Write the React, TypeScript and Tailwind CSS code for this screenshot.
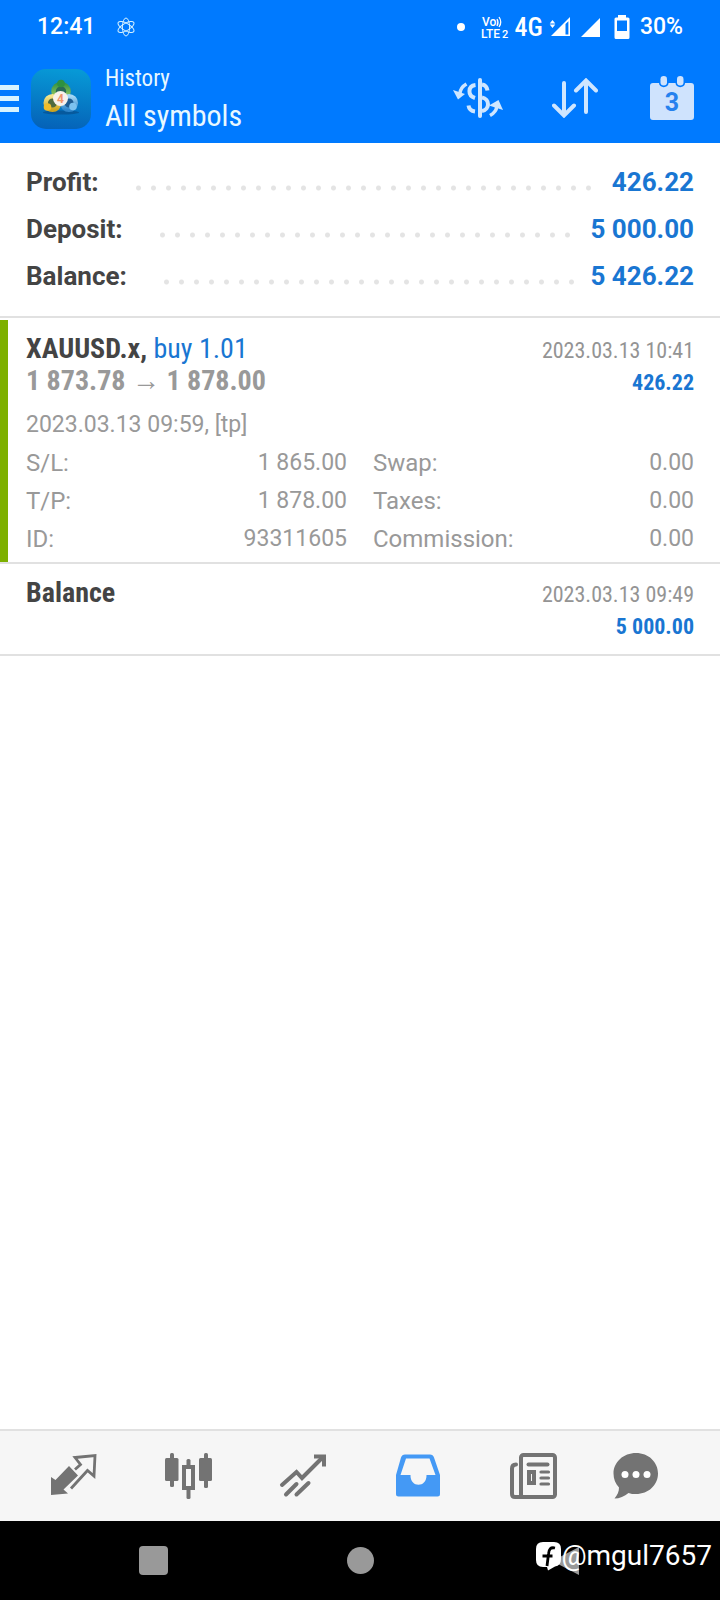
import React, { useState } from 'react';
import clsx from 'clsx';

const summary = [
  { label: 'Profit:', value: '426.22' },
  { label: 'Deposit:', value: '5 000.00' },
  { label: 'Balance:', value: '5 426.22' },
];

const details = [
  { label: 'S/L:', value: '1 865.00' },
  { label: 'Swap:', value: '0.00' },
  { label: 'T/P:', value: '1 878.00' },
  { label: 'Taxes:', value: '0.00' },
  { label: 'ID:', value: '93311605' },
  { label: 'Commission:', value: '0.00' },
];

const condensed = "font-['Roboto_Condensed','Roboto',sans-serif]";

const AtomIcon = () => (
  <svg width="18" height="20" viewBox="0 0 18 20" fill="none" stroke="#d5f1ff" strokeWidth="1">
    <ellipse cx="9" cy="10" rx="3.600" ry="9" />
    <ellipse cx="9" cy="10" rx="3.600" ry="9" transform="rotate(60 9 10)" />
    <ellipse cx="9" cy="10" rx="3.600" ry="9" transform="rotate(-60 9 10)" />
  </svg>
);

const VolteIcon = () => (
  <svg width="28" height="28" viewBox="0 0 28 28" fill="#fff">
    <text x="1" y="13" fontSize="12" fontWeight="500" fontFamily="Roboto, sans-serif">Vo</text>
    <g fill="none" stroke="#fff" strokeWidth="1.300">
      <path d="M16 6q2 3.500 0 7" />
      <path d="M18 4q3.500 5 0 10" />
    </g>
    <text x="0" y="25" fontSize="12" fontWeight="500" fontFamily="Roboto, sans-serif">LTE</text>
    <text x="21" y="25" fontSize="11" fontWeight="500" fontFamily="Roboto, sans-serif">2</text>
  </svg>
);

const SignalDataIcon = () => (
  <svg width="22" height="20" viewBox="0 0 22 20" fill="#fff">
    <path d="M3.500 3 6.300 6.500H.7zM3.500 11 .7 7.500h5.600z" />
    <path d="M21 0v19H2zM19.400 4.200 16.500 7v10.400h2.900z" fillRule="evenodd" />
  </svg>
);

const SignalIcon = () => (
  <svg width="19" height="19" viewBox="0 0 19 19" fill="#fff">
    <path d="M19 0v19H0z" />
  </svg>
);

const BatteryIcon = () => (
  <svg width="16" height="24" viewBox="0 0 16 24" fill="#fff">
    <path fillRule="evenodd" d="M4 0h8v2.500h2A1.500 1.500 0 0 1 15.500 4v18.500A1.500 1.500 0 0 1 14 24H2A1.500 1.500 0 0 1 .5 22.500V4A1.500 1.500 0 0 1 2 2.500h2zM3 5.500V16h10V5.500z" />
  </svg>
);

const AppLogo = () => (
  <svg width="60" height="60" viewBox="0 0 60 60">
    <defs>
      <linearGradient id="logo-bg" x1="0.5" y1="0" x2="0.4" y2="1">
        <stop offset="0" stopColor="#0799d6" />
        <stop offset="1" stopColor="#0562b8" />
      </linearGradient>
      <linearGradient id="logo-green" x1="0" y1="0" x2="0" y2="1">
        <stop offset="0" stopColor="#3a9444" />
        <stop offset="1" stopColor="#a5d468" />
      </linearGradient>
      <linearGradient id="logo-yellow" x1="0" y1="0" x2="0" y2="1">
        <stop offset="0" stopColor="#f3e58d" />
        <stop offset="1" stopColor="#cda51f" />
      </linearGradient>
      <linearGradient id="logo-blue" x1="0" y1="0" x2="0" y2="1">
        <stop offset="0" stopColor="#a5d8f5" />
        <stop offset="1" stopColor="#2f86cc" />
      </linearGradient>
    </defs>
    <rect width="60" height="60" rx="15" fill="url(#logo-bg)" />
    <ellipse cx="30" cy="43.500" rx="18" ry="2" fill="#064a86" opacity=".6" />
    <circle cx="30" cy="22.500" r="7.500" fill="#2a6b55" stroke="url(#logo-green)" strokeWidth="4.500" />
    <circle cx="21.500" cy="34" r="6.800" fill="#4f6a3e" stroke="url(#logo-yellow)" strokeWidth="4.500" />
    <circle cx="38" cy="34" r="6.800" fill="#1f5c92" stroke="url(#logo-blue)" strokeWidth="4.500" />
    <circle cx="30" cy="14.500" r="3.800" fill="#2e9141" />
    <circle cx="16.500" cy="38" r="3.800" fill="#f0bd2c" />
    <circle cx="42" cy="37.500" r="3.800" fill="#7cc2f0" />
    <circle cx="29.500" cy="29.500" r="7.500" fill="#f7f1ea" />
    <text x="29.500" y="34" fontSize="12" fontWeight="700" fill="#f0956b" textAnchor="middle" fontFamily="Roboto, sans-serif">4</text>
  </svg>
);

const CurrencyIcon = () => (
  <svg width="50" height="40" viewBox="0 0 50 40" fill="none" stroke="#cfe6ff" strokeWidth="4">
    <path d="M27 2v36" strokeLinecap="round" />
    <path d="M22.500 7c-8 1-8 10.500-.5 13" />
    <path d="M29 6.500c3 .5 5 2.500 5.500 6" />
    <path d="M29 19.500c8 1.500 8 12 0 13.500" />
    <path d="M22 33.500c-4-.5-6-2.500-6.500-6" />
    <path d="M13.500 6C9 8.500 7.500 11 7 15" strokeWidth="3.500" />
    <path d="M37 37.500c4.500-2.500 6.500-5 6.700-9" strokeWidth="3.500" />
    <path d="M0 12l12 4L5 21.500z" fill="#cfe6ff" stroke="none" />
    <path d="M36 27.500 45.500 22 50 32z" fill="#cfe6ff" stroke="none" />
  </svg>
);

const SortIcon = () => (
  <svg width="46" height="40" viewBox="0 0 46 40" fill="none" stroke="#cfe6ff" strokeWidth="4" strokeLinecap="round">
    <path d="M12 5v32M2 27.500 12 37.500l10-10" />
    <path d="M34 34V3M24 12.500 34 2.500l10 10" />
  </svg>
);

const CalendarIcon = () => (
  <svg width="44" height="44" viewBox="0 0 44 44" fill="#cfe3fd">
    <path d="M3 7h6c0 5.500 9.500 5.500 9.500 0h7c0 5.500 9.500 5.500 9.500 0h6q3 0 3 3v31q0 3-3 3H3q-3 0-3-3V10q0-3 3-3z" />
    <rect x="10.500" y="0" width="6.500" height="9.500" rx="3.200" />
    <rect x="27" y="0" width="6.500" height="9.500" rx="3.200" />
    <text x="22" y="35" fontSize="25" fontWeight="700" fill="#2581ee" textAnchor="middle" fontFamily="Roboto, sans-serif">3</text>
  </svg>
);

const QuotesIcon = () => (
  <svg width="48" height="48" viewBox="0 0 48 48">
    <path d="M2 25v18l17-1.500-4.500-4L29 23.500l-9-9.500L6.500 28z" fill="#737373" />
    <path d="M26 17.500l5.500-5-5.500-7 20-2-1 20.500-6.500-5.500L22 36.500" fill="none" stroke="#737373" strokeWidth="2.800" />
  </svg>
);

const ChartIcon = () => (
  <svg width="48" height="48" viewBox="0 0 48 48" fill="#737373">
    <rect x="6" y="1" width="4" height="34" rx="1.500" />
    <rect x="1" y="6" width="13.500" height="23" rx="1.500" />
    <rect x="40" y="1" width="4" height="35" rx="1.500" />
    <rect x="35" y="6" width="13" height="23" rx="1.500" />
    <rect x="22.500" y="7" width="4" height="40" rx="1.500" />
    <rect x="20" y="15" width="9" height="21" fill="#f6f6f6" stroke="#737373" strokeWidth="4" />
  </svg>
);

const TrendIcon = () => (
  <svg width="48" height="48" viewBox="0 0 48 48" fill="none" stroke="#737373" strokeWidth="4">
    <path d="M3 33 17.500 20l5.500 6L44 5" strokeLinecap="round" />
    <path d="M35 4.500h10v10" />
    <path d="M7 42.500 17.500 32M17.500 42.500 29.500 31" strokeLinecap="round" />
  </svg>
);

const InboxIcon = () => (
  <svg width="48" height="48" viewBox="0 0 48 48">
    <path d="M11 2.500h25q3 0 4 3L46 23v19q0 2.500-2.500 2.500h-39Q2 44.500 2 42V23l5-17.500q1-3 4-3z" fill="#4499f5" />
    <path d="M12 6.500h23.500L41.500 23H32.500c.5 13-16.500 13-16 0H6.500z" fill="#f6f6f6" />
  </svg>
);

const NewsIcon = () => (
  <svg width="48" height="48" viewBox="0 0 48 48" fill="none" stroke="#737373" strokeWidth="4">
    <rect x="12" y="3" width="34" height="42" rx="2.500" />
    <path d="M7 12.500Q3 12.500 3 16.500V42q0 3 3 3h8" strokeLinecap="round" />
    <path d="M19.500 12.500h19" strokeLinecap="round" />
    <rect x="20" y="20" width="5" height="11" />
    <path d="M32 20h7.500M32 26h7.500M32 32h7.500" strokeWidth="3.200" strokeLinecap="round" />
  </svg>
);

const ChatIcon = () => (
  <svg width="48" height="48" viewBox="0 0 48 48">
    <path d="M24 1c12.500 0 22 9 22 20.500S36.500 42 24 42c-3 0-5 0-7.500-1-4 3.500-9 5.500-14 5.500 3-3.500 4.500-7 4.500-11C3.500 32 1.500 27 1.500 21.500 1.500 10 11.500 1 24 1z" fill="#737373" />
    <g fill="#fff">
      <circle cx="13" cy="22.500" r="3.500" />
      <circle cx="24" cy="22.500" r="3.500" />
      <circle cx="35" cy="22.500" r="3.500" />
    </g>
  </svg>
);

const WatermarkIcon = () => (
  <svg width="25" height="29" viewBox="0 0 25 29">
    <path d="M7 0h11q7 0 7 7v10q0 7-6 7.500L12 28.500 11 25H7q-7 0-7-7V7q0-7 7-7z" fill="#fff" />
    <path d="M19 6c-4.500-1-6 1-6.500 6L11 24M6.500 14h10" fill="none" stroke="#000" strokeWidth="2.800" />
  </svg>
);

const tabs = [
  { name: 'Quotes', icon: <QuotesIcon /> },
  { name: 'Charts', icon: <ChartIcon /> },
  { name: 'Trade', icon: <TrendIcon /> },
  { name: 'History', icon: <InboxIcon /> },
  { name: 'News', icon: <NewsIcon /> },
  { name: 'Messages', icon: <ChatIcon /> },
];

const StatusBar = () => (
  <div className="flex h-[54px] items-center justify-between px-[37px] text-[23px] font-medium text-white">
    <div className="flex items-center gap-[22px]">
      <span>12:41</span>
      <AtomIcon />
    </div>
    <div className="flex items-center">
      <span className="mr-4 size-2 rounded-full bg-white" />
      <VolteIcon />
      <span className={clsx(condensed, 'mx-1.5 text-[26px]')}>4G</span>
      <SignalDataIcon />
      <span className="ml-2.5 mr-3.5"><SignalIcon /></span>
      <BatteryIcon />
      <span className="ml-2.5">30%</span>
    </div>
  </div>
);

const TradeHead = ({ title, date, amount, children }: any) => (
  <div className={clsx(condensed, 'flex justify-between')}>
    <div className="text-[28px] leading-8 text-[#444444]">
      <h2>{title}</h2>
      {children}
    </div>
    <div className="pt-0.5 text-right text-[22px] leading-8">
      <p className="text-[#949494]">{date}</p>
      <p className="font-bold text-[#1976d2]">{amount}</p>
    </div>
  </div>
);

export default function App() {
  const [active, setActive] = useState('History');

  return (
    <div className="flex min-h-screen flex-col bg-white font-['Roboto',sans-serif]">
      <header className="bg-[#007aff]">
        <StatusBar />
        <div className="flex h-[89px] items-center">
          <button aria-label="Menu" className="flex flex-col gap-1.5">
            <span className="h-[5px] w-[19px] bg-[#d8f3ff]" />
            <span className="h-[5px] w-[19px] bg-[#d8f3ff]" />
            <span className="h-[5px] w-[19px] bg-[#d8f3ff]" />
          </button>
          <div className="ml-3 mr-[14px]"><AppLogo /></div>
          <div className={clsx(condensed, 'flex-1 pb-0.5 text-[#e8f8ff]')}>
            <p className="text-[23px] leading-9">History</p>
            <h1 className="text-[30px] leading-[38px]">All symbols</h1>
          </div>
          <div className="flex items-center pb-0.5">
            <button aria-label="Symbols" className="flex w-[97px] justify-center"><CurrencyIcon /></button>
            <button aria-label="Sort" className="flex w-[97px] justify-center"><SortIcon /></button>
            <button aria-label="Period" className="flex w-[97px] justify-center"><CalendarIcon /></button>
          </div>
        </div>
      </header>

      <main className="flex-1">
        <section className="border-b-2 border-[#e1e1e1] px-[26px] pb-4 pt-4">
          {summary.map((row) => (
            <div key={row.label} className="flex h-[47px] items-center text-[26px] font-bold">
              <span className="text-[#444444]">{row.label}</span>
              <span className="ml-8 mr-4 mt-[10px] h-1.5 flex-1 bg-[radial-gradient(circle,#e4e4e4_2px,transparent_3px)] bg-[length:15px_6px] bg-repeat-x" />
              <span className="text-[#1976d2]">{row.value}</span>
            </div>
          ))}
        </section>

        <section className="border-b-2 border-[#e1e1e1] pt-0.5">
          <div className="border-l-8 border-[#7db000] pb-1 pl-[18px] pr-[26px] pt-[13px]">
            <TradeHead
              title={<><b>XAUUSD.x,</b> <span className="text-[#1976d2]">buy 1.01</span></>}
              date="2023.03.13 10:41"
              amount="426.22"
            >
              <p className="font-bold text-[#999999]">1 873.78 <span className="font-normal">→</span> 1 878.00</p>
            </TradeHead>
            <div className="pt-[7px] text-[23px] leading-[38px] text-[#999999]">
              <p>2023.03.13 09:59, [tp]</p>
              <dl className="grid grid-cols-2 gap-x-[26px]">
                {details.map((item) => (
                  <div key={item.label} className="flex justify-between">
                    <dt className="text-2xl leading-[38px]">{item.label}</dt>
                    <dd>{item.value}</dd>
                  </div>
                ))}
              </dl>
            </div>
          </div>
        </section>

        <section className="border-b-2 border-[#e1e1e1] px-[26px] pb-[11px] pt-[13px]">
          <TradeHead title={<b>Balance</b>} date="2023.03.13 09:49" amount="5 000.00" />
        </section>
      </main>

      <nav className="grid h-[92px] grid-cols-[5fr_5fr_5fr_5fr_5fr_4fr] items-center border-t-2 border-[#e1e1e1] bg-[#f6f6f6] pl-[15px] pr-[38px]">
        {tabs.map((tab) => (
          <button
            key={tab.name}
            aria-label={tab.name}
            aria-current={active === tab.name ? 'page' : undefined}
            className="flex justify-center"
            onClick={() => setActive(tab.name)}
          >
            {tab.icon}
          </button>
        ))}
      </nav>

      <footer className="relative grid h-[79px] grid-cols-3 items-center bg-black pl-[50px] pr-12">
        <button aria-label="Recent apps" className="flex justify-center">
          <span className="size-[29px] rounded-sm bg-[#999999]" />
        </button>
        <button aria-label="Home" className="flex justify-center">
          <span className="size-[27px] rounded-full bg-[#999999]" />
        </button>
        <button aria-label="Back" className="flex justify-center">
          <svg width="28" height="30" viewBox="0 0 28 30" fill="#999999">
            <path d="M25 1v28L2 17q-2-2 0-4z" />
          </svg>
        </button>
        <div className="absolute right-2 top-[14px] flex items-center text-[28px] font-normal text-white">
          <WatermarkIcon />
          <span>@mgul7657</span>
        </div>
      </footer>
    </div>
  );
}
